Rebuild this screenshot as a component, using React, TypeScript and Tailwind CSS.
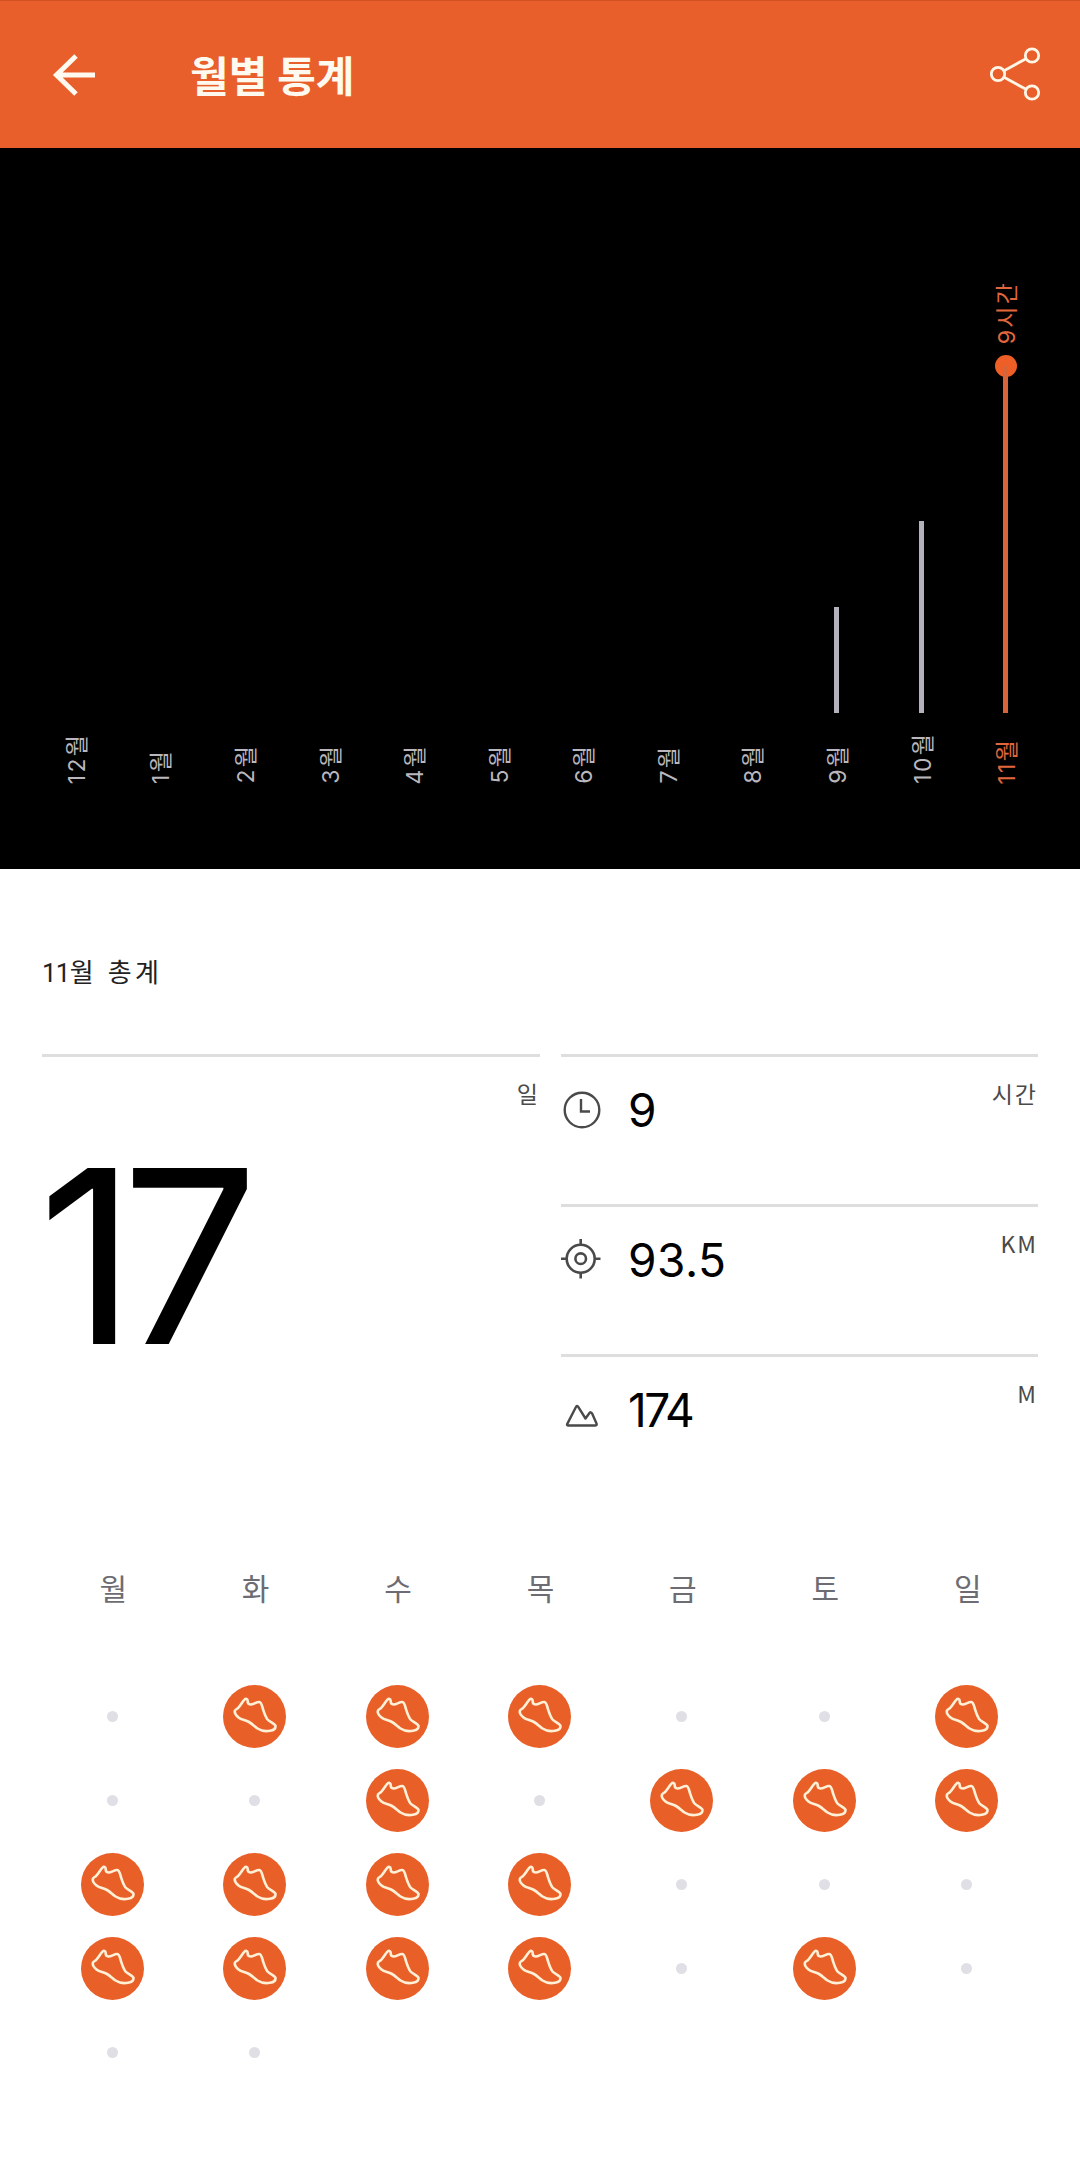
interface MonthBar {
  label: string
  height: number
  value?: string
}

const months: MonthBar[] = [
  { label: "12월", height: 0 },
  { label: "1월", height: 0 },
  { label: "2월", height: 0 },
  { label: "3월", height: 0 },
  { label: "4월", height: 0 },
  { label: "5월", height: 0 },
  { label: "6월", height: 0 },
  { label: "7월", height: 0 },
  { label: "8월", height: 0 },
  { label: "9월", height: 106 },
  { label: "10월", height: 192 },
  { label: "11월", height: 347, value: "9시간" },
]

const weekdays = ["월", "화", "수", "목", "금", "토", "일"]

// 1 = workout day, 0 = rest day
const weeks = [
  [0, 1, 1, 1, 0, 0, 1],
  [0, 0, 1, 0, 1, 1, 1],
  [1, 1, 1, 1, 0, 0, 0],
  [1, 1, 1, 1, 0, 1, 0],
  [0, 0],
]

export default function App() {
  return (
    <div className="w-[1080px] h-[2165px] overflow-hidden bg-white font-['Inter','Noto_Sans_CJK_KR',sans-serif]">
      <Header />
      <MonthChart />
      <Totals />
      <Calendar />
    </div>
  )
}

function Header() {
  return (
    <header className="flex items-center justify-between h-[148px] pl-[50px] pr-[36px] bg-[#e95f2b] border-t border-[#cf5220]">
      <div className="flex items-center">
        <svg width="48" height="48" viewBox="0 0 48 48" fill="none" stroke="#fffaf0" strokeWidth="5">
          <path d="M45 24H6M26 5 6.500 24 26 43" />
        </svg>
        <h1 className="ml-[92px] pt-[4px] text-[42px] leading-[60px] font-bold text-[#fffaf0]">월별 통계</h1>
      </div>
      <svg width="56" height="56" viewBox="0 0 56 56" fill="none" stroke="#fff6e6" strokeWidth="2.800">
        <circle cx="10" cy="27" r="6.700" />
        <circle cx="44" cy="8.500" r="6.700" />
        <circle cx="44" cy="45.500" r="6.700" />
        <path d="M16 23.700 38 11.800M16 30.300 38 42.200" />
      </svg>
    </header>
  )
}

function MonthChart() {
  return (
    <section className="h-[721px] bg-black pl-[33px] pr-[32px] text-[23px] leading-[30px] tracking-[2.2px]">
      <div className="grid grid-cols-12 h-[565px]">
        {months.map((month) => (
          <div key={month.label} className="flex flex-col items-center justify-end">
            {month.value && (
              <>
                <span className="ml-[3px] mb-[11px] rotate-180 [writing-mode:vertical-rl] [text-orientation:sideways] text-[#e0673c]">
                  {month.value}
                </span>
                <span className="size-[22px] -mb-[11px] shrink-0 rounded-full bg-[#ee5f27]" />
              </>
            )}
            <span
              className={`w-[5px] shrink-0 ${month.value ? "bg-[#d8643a]" : "bg-[#b4b1bd]"}`}
              style={{ height: month.height }}
            />
          </div>
        ))}
      </div>
      <div className="grid grid-cols-12 h-[71px]">
        {months.map((month) => (
          <div key={month.label} className="flex items-end justify-center pl-[3px]">
            <span
              className={`rotate-180 [writing-mode:vertical-rl] [text-orientation:sideways] ${
                month.value ? "text-[#e0673c]" : "text-[#b9b7bd]"
              }`}
            >
              {month.label}
            </span>
          </div>
        ))}
      </div>
    </section>
  )
}

function Totals() {
  return (
    <section className="px-[42px] pt-[82px]">
      <h2 className="h-[103px] text-[26px] leading-[40px] tracking-[3.2px] [word-spacing:2px] text-[#222] font-['Noto_Sans_CJK_KR',sans-serif]">
        <span className="font-['Roboto',sans-serif] tracking-[-0.8px]">11</span>월 총계
      </h2>
      <div className="flex gap-[21px]">
        <div className="w-[498px] h-[450px] border-t-[3px] border-[#dedede]">
          <Unit>일</Unit>
          <div className="mt-[25px] -ml-[4px] text-[242px] leading-[240px] tracking-[-15px] text-black">17</div>
        </div>
        <div className="flex-1">
          <StatRow value="9" unit="시간" icon={<ClockIcon />} />
          <StatRow value="93.5" unit="KM" icon={<TargetIcon />} />
          <StatRow value="174" unit="M" icon={<MountainIcon />} tight />
        </div>
      </div>
    </section>
  )
}

function Unit({ children }: { children: React.ReactNode }) {
  return (
    <div className="text-right pt-[18px] text-[23px] leading-[36px] tracking-[2px] text-[#4a4a4a] font-['Noto_Sans_CJK_KR',sans-serif]">
      {children}
    </div>
  )
}

interface StatRowProps {
  value: string
  unit: string
  icon: React.ReactNode
  tight?: boolean
}

function StatRow({ value, unit, icon, tight }: StatRowProps) {
  return (
    <div className="flex h-[150px] border-t-[3px] border-[#dedede]">
      <div className="mt-[32px]">{icon}</div>
      <span
        className={`flex-1 ml-[27px] mt-[23px] text-[46px] leading-[60px] text-black ${
          tight ? "tracking-[-2.500px]" : "tracking-[0.500px]"
        }`}
      >
        {value}
      </span>
      <Unit>{unit}</Unit>
    </div>
  )
}

function ClockIcon() {
  return (
    <svg width="40" height="40" viewBox="0 0 40 40" fill="none" stroke="#4a4a4a" strokeWidth="2.400">
      <circle cx="21" cy="21" r="17.300" />
      <path d="M20 10v12.500h9" />
    </svg>
  )
}

function TargetIcon() {
  return (
    <svg width="40" height="40" viewBox="0 0 40 40" fill="none" stroke="#4a4a4a" strokeWidth="2.600">
      <circle cx="19.700" cy="19.700" r="14" />
      <circle cx="19.700" cy="19.700" r="5.300" />
      <path d="M19.700 0v6M19.700 33.500v6M0 19.700h6M33.500 19.700h6" />
    </svg>
  )
}

function MountainIcon() {
  return (
    <svg width="40" height="40" viewBox="0 0 40 40" fill="none" stroke="#4a4a4a" strokeWidth="2.400" strokeLinejoin="round">
      <path d="M7 36.500Q5.500 36.500 6.300 34.900L14.800 18.300Q16 15.800 17.400 18.100L24.500 29.500 28.500 24Q29.800 22.500 31 24.300L35.500 34.500Q36.200 36.500 34.500 36.500Z" />
    </svg>
  )
}

function Calendar() {
  return (
    <section className="pl-[41px] pr-[42px] pt-[45px]">
      <div className="grid grid-cols-7 h-[125px] text-center text-[30px] leading-[44px] text-[#6d6c72]">
        {weekdays.map((day) => (
          <span key={day} className="pl-[2px] pt-[18px]">{day}</span>
        ))}
      </div>
      {weeks.map((week, i) => (
        <div key={i} className="grid grid-cols-7 h-[84px]">
          {week.map((active, j) => (
            <div key={j} className="flex items-center justify-center">
              {active ? <ShoeBadge /> : <span className="size-[11px] rounded-full bg-[#dfdfe5]" />}
            </div>
          ))}
        </div>
      ))}
    </section>
  )
}

function ShoeBadge() {
  return (
    <span className="size-[63px] rounded-full bg-[#e85f28]">
      <svg width="63" height="63" viewBox="0 0 63 63" fill="none" stroke="#fff0d6" strokeWidth="2.600" strokeLinejoin="round">
        <path d="M21.500 14.700C22.800 13.200 24.600 13.700 24.600 15.600C24.600 18 25.300 19.500 27.300 19.500C31 19.500 33.500 16.600 36.300 17C38.600 17.300 39 21 40.300 25.200C41.500 28.800 42.500 31.800 44.300 34.300C46.500 37 52.200 38.500 52.500 41C52.700 43.500 50 45.300 47 45.800C42.500 46.700 38 45.800 34.500 43.500C31.500 41.500 29.500 39 26 37C22 34.800 18.500 35 15.500 32.500C12.500 30 11.200 27.500 12 25.500C12.800 24.300 14 24 15.200 22.800C17.600 20.400 19 17.300 21.500 14.700Z" />
      </svg>
    </span>
  )
}
